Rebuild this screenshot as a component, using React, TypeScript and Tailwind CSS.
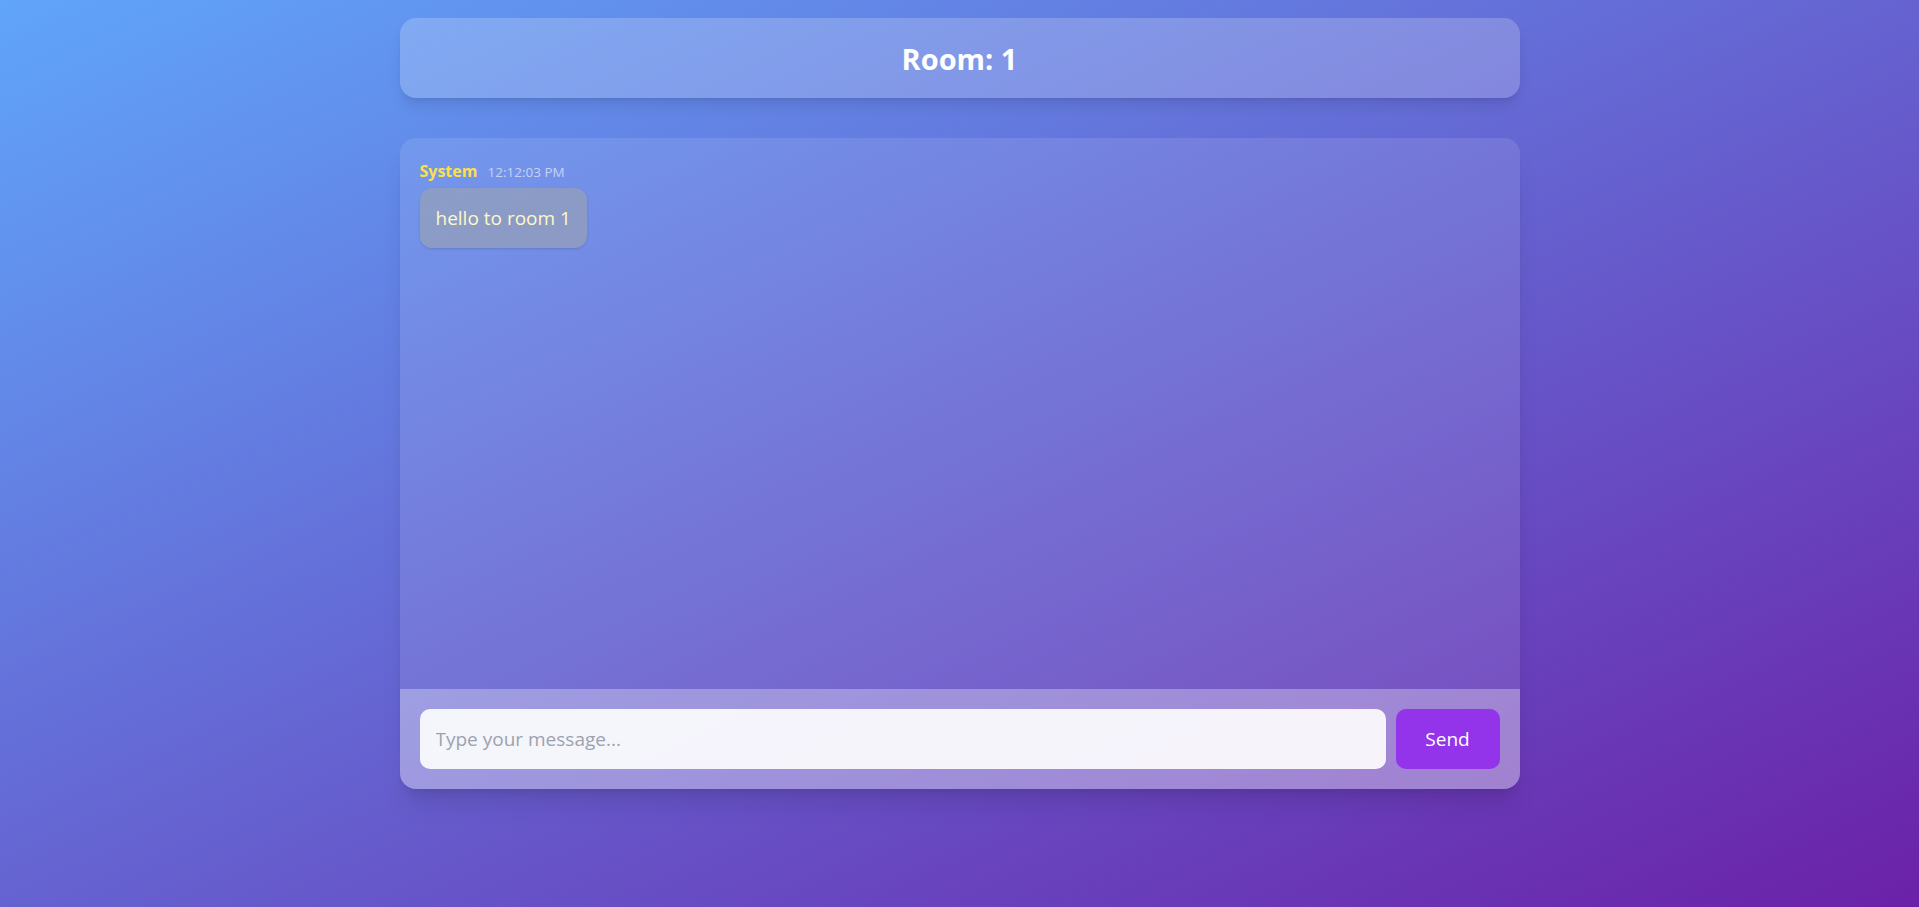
import { useState } from 'react';

// ─── Types ────────────────────────────────────────────────────────────────────

type Message = {
  id: number;
  user: string;
  time: string;
  text: string;
};

const INITIAL: Message[] = [{ id: 1, user: 'System', time: '12:12:03 PM', text: 'hello to room 1' }];

// ─── Message bubble ───────────────────────────────────────────────────────────

function MessageItem({ msg }: { msg: Message }) {
  return (
    <div className="flex flex-col items-start">
      <div className="flex items-baseline gap-[10px] mb-[6px]">
        <span className="text-[16px] leading-[20px] font-bold text-[#fde047]">{msg.user}</span>
        <span className="text-[13.5px] leading-[20px] text-white/60">{msg.time}</span>
      </div>
      <div className="px-4 py-[15px] rounded-xl bg-[#9ca3af]/60 shadow-sm text-[19px] leading-[30px] text-[#fef9c3]">
        {msg.text}
      </div>
    </div>
  );
}

// ─── App ──────────────────────────────────────────────────────────────────────

export default function App() {
  const [messages] = useState<Message[]>(INITIAL);
  const [draft, setDraft] = useState('');

  return (
    <div
      className="min-h-screen w-full bg-linear-to-br/srgb from-[#60a5fa] to-[#6b21a8] flex flex-col items-center pt-[18px]"
      style={{ fontFamily: '"Open Sans", "Noto Sans", sans-serif' }}
    >
      {/* Header */}
      <header className="w-[1120px] h-20 shrink-0 rounded-2xl bg-white/20 shadow-lg flex items-center justify-center mb-10">
        <h1 className="text-[29px] font-bold text-white translate-y-[1px]">Room: 1</h1>
      </header>

      {/* Chat panel */}
      <section className="w-[1120px] h-[651px] rounded-2xl bg-white/10 shadow-xl overflow-hidden flex flex-col">
        <div className="flex-1 overflow-y-auto px-5 pt-[23px] pb-5 space-y-4">
          {messages.map((m) => (
            <MessageItem key={m.id} msg={m} />
          ))}
        </div>

        {/* Composer */}
        <div className="h-[100px] shrink-0 bg-white/30 p-5 flex gap-[10px]">
          <input
            type="text"
            value={draft}
            onChange={(e) => setDraft(e.target.value)}
            placeholder="Type your message..."
            className="flex-1 h-[60px] rounded-[10px] bg-white/90 px-4 text-[19px] text-gray-800 placeholder-[#9ca3af] focus:outline-none"
          />
          <button className="w-[104px] h-[60px] rounded-[10px] bg-[#9333ea] text-white text-[19px]">Send</button>
        </div>
      </section>
    </div>
  );
}
